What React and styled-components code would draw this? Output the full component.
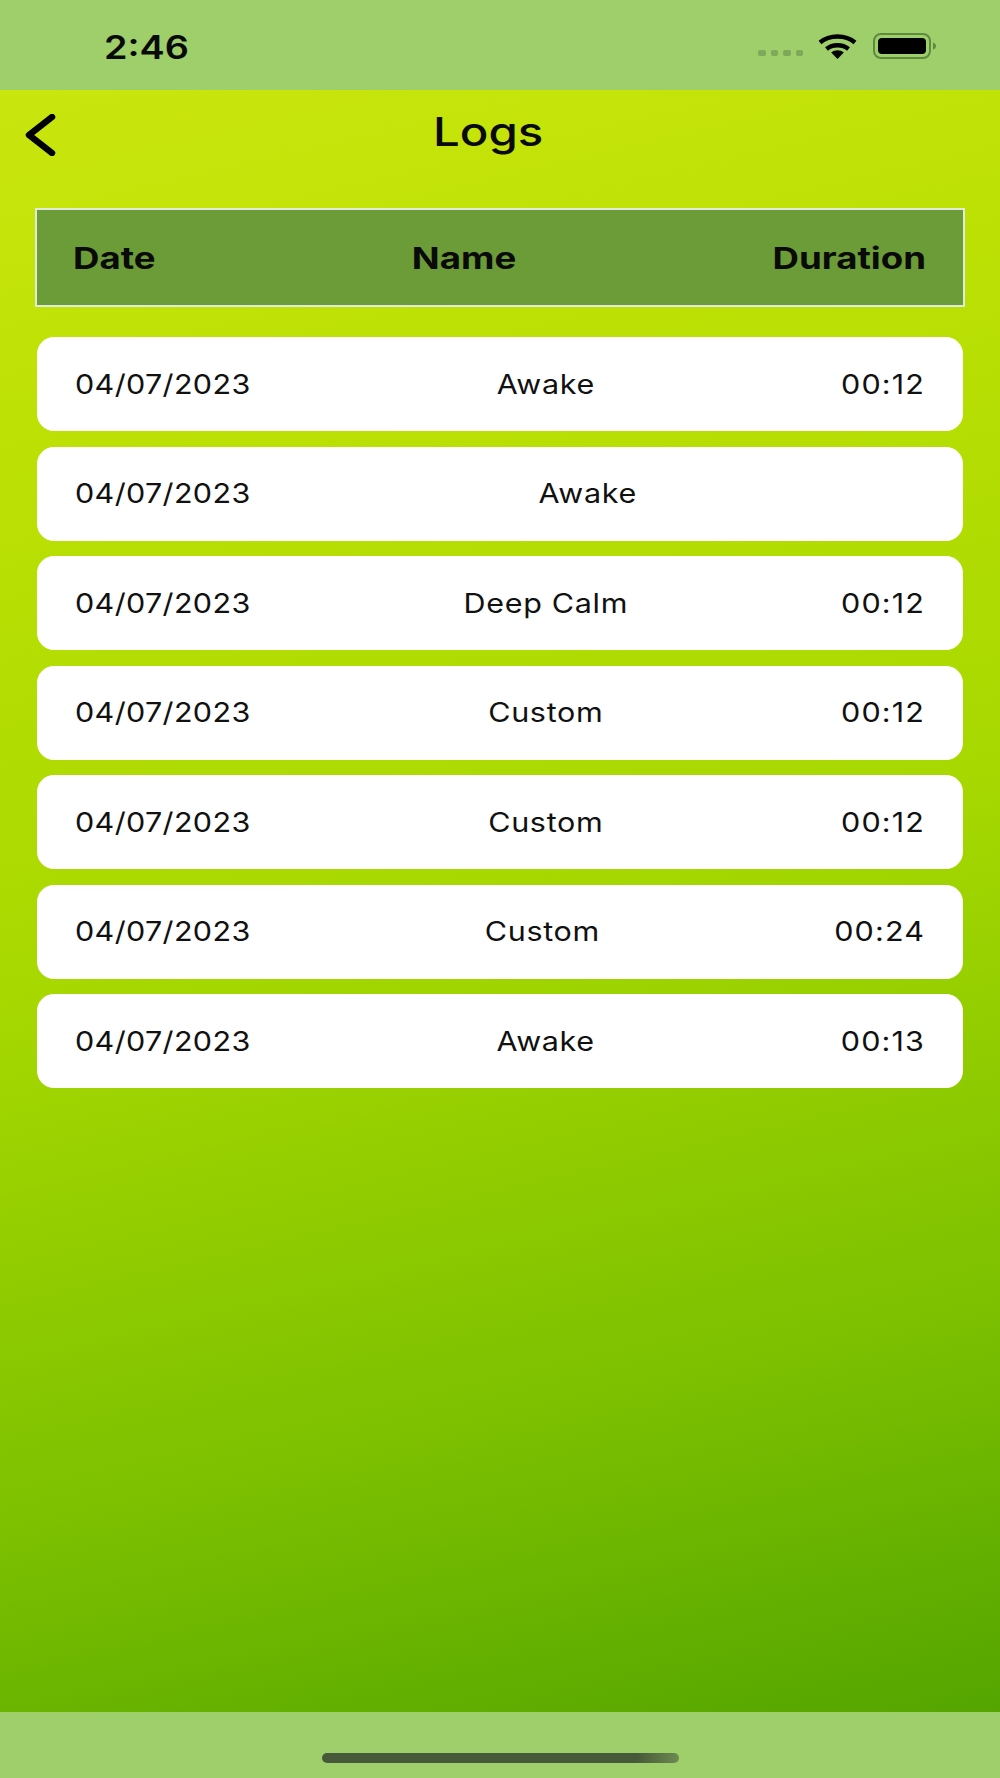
import React from "react";
import styled, { createGlobalStyle } from "styled-components";

const GlobalStyle = createGlobalStyle`
  html, body {
    margin: 0;
    padding: 0;
    background: #9ecf6a;
  }
  * {
    box-sizing: border-box;
  }
`;

const Screen = styled.div`
  width: 1000px;
  height: 1778px;
  display: flex;
  flex-direction: column;
  font-family: Inter, "Liberation Sans", sans-serif;
  color: #0a0a0a;
  overflow: hidden;
`;

const StatusBar = styled.div`
  height: 90px;
  flex: none;
  background: #9ecf6a;
  display: flex;
  align-items: center;
  justify-content: space-between;
  padding: 0 64px 0 104px;
`;

const Clock = styled.div`
  font-size: 32px;
  font-weight: 600;
  line-height: 1;
  margin-top: 5px;
  transform: scaleX(1.18);
  transform-origin: left center;
`;

const StatusIcons = styled.div`
  display: flex;
  align-items: center;
  height: 26px;
  margin-top: 2px;
`;

const SignalDots = styled.div`
  display: flex;
  gap: 5px;
  margin: 14px 15px 0 0;
`;

const Dot = styled.span`
  width: 7.5px;
  height: 6px;
  border-radius: 2px;
  background: #7fa85a;
`;

const Content = styled.main`
  flex: 1;
  background: linear-gradient(167deg, #c9e60e 0%, #bee105 18%, #a6d800 50%, #7cc000 78%, #54a500 100%);
  display: flex;
  flex-direction: column;
`;

const NavBar = styled.header`
  display: flex;
  align-items: center;
  height: 84px;
  padding-left: 25px;
`;

const BackIcon = styled.svg`
  width: 32px;
  height: 42px;
  flex: none;
  margin-top: 6px;
`;

const Title = styled.h1`
  margin: 0 0 0 376px;
  font-size: 40px;
  font-weight: 500;
  line-height: 1;
  transform: scaleX(1.185);
  transform-origin: left center;
`;

const Cells = styled.div`
  display: flex;
  justify-content: space-between;
  width: calc(100% / ${(p) => p.$stretch});
  flex: none;
  white-space: nowrap;
  transform: scaleX(${(p) => p.$stretch});
  transform-origin: left center;
`;

const TableHead = styled.div`
  margin: 34px 35px 0;
  height: 99px;
  padding: 0 37px 0 36px;
  display: flex;
  align-items: center;
  background: #6c9c37;
  border: 2px solid #e2eadb;
  font-size: 30px;
  font-weight: 700;
`;

const Rows = styled.div`
  margin: 30px 37px 0;
  display: flex;
  flex-direction: column;
  gap: 15.5px;
`;

const Row = styled.div`
  height: 94px;
  padding: 0 38px;
  display: flex;
  align-items: center;
  background: #fff;
  border-radius: 17px;
  font-size: 27px;
  font-weight: 400;
  color: #111;
`;

const DateCell = styled.span`
  letter-spacing: 0.3px;
`;

const NameCell = styled.span`
  letter-spacing: 0.6px;
`;

const DurationCell = styled.span`
  letter-spacing: 1px;
`;

const BottomBar = styled.div`
  height: 66px;
  flex: none;
  background: #9ecf6a;
  display: flex;
  justify-content: center;
  padding-top: 41px;
`;

const HomeIndicator = styled.div`
  width: 357px;
  height: 10px;
  border-radius: 5px;
  background: linear-gradient(90deg, #46593a 0%, #46593a 88%, #6d8a50 100%);
`;

const logs = [
  { date: "04/07/2023", name: "Awake", duration: "00:12" },
  { date: "04/07/2023", name: "Awake", duration: "" },
  { date: "04/07/2023", name: "Deep Calm", duration: "00:12" },
  { date: "04/07/2023", name: "Custom", duration: "00:12" },
  { date: "04/07/2023", name: "Custom", duration: "00:12" },
  { date: "04/07/2023", name: "Custom", duration: "00:24" },
  { date: "04/07/2023", name: "Awake", duration: "00:13" },
];

function WifiIcon() {
  return (
    <svg width="39" height="25" viewBox="0 0 39 25" fill="none">
      <path d="M2 8.5C11.5 0.5 27.5 0.5 37 8.5" stroke="#000" strokeWidth="4.4" />
      <path d="M8.5 15C14.5 10 24.5 10 30.5 15" stroke="#000" strokeWidth="4.4" />
      <path d="M13.2 18.6C17 15.4 22 15.4 25.8 18.6L19.5 25Z" fill="#000" />
    </svg>
  );
}

function BatteryIcon() {
  return (
    <svg width="63" height="26" viewBox="0 0 63 26" fill="none" style={{ marginLeft: 16 }}>
      <rect x="1" y="1" width="56" height="24" rx="7" stroke="#5f8a3f" strokeWidth="2" />
      <rect x="5" y="5" width="48" height="16" rx="4" fill="#000" />
      <path d="M60 9.5C62 10 63 11.5 63 13C63 14.5 62 16 60 16.5Z" fill="#5f8a3f" />
    </svg>
  );
}

export default function App() {
  return (
    <Screen>
      <GlobalStyle />
      <StatusBar>
        <Clock>2:46</Clock>
        <StatusIcons>
          <SignalDots>
            <Dot />
            <Dot />
            <Dot />
            <Dot />
          </SignalDots>
          <WifiIcon />
          <BatteryIcon />
        </StatusIcons>
      </StatusBar>
      <Content>
        <NavBar>
          <BackIcon viewBox="0 0 32 42" fill="none">
            <path d="M27 3L4 21L27 39" stroke="#000" strokeWidth="6.5" strokeLinecap="round" strokeLinejoin="round" />
          </BackIcon>
          <Title>Logs</Title>
        </NavBar>
        <TableHead>
          <Cells $stretch={1.22}>
            <span>Date</span>
            <span>Name</span>
            <span>Duration</span>
          </Cells>
        </TableHead>
        <Rows>
          {logs.map((log, i) => (
            <Row key={i}>
              <Cells $stretch={1.13}>
                <DateCell>{log.date}</DateCell>
                <NameCell>{log.name}</NameCell>
                <DurationCell>{log.duration}</DurationCell>
              </Cells>
            </Row>
          ))}
        </Rows>
      </Content>
      <BottomBar>
        <HomeIndicator />
      </BottomBar>
    </Screen>
  );
}
